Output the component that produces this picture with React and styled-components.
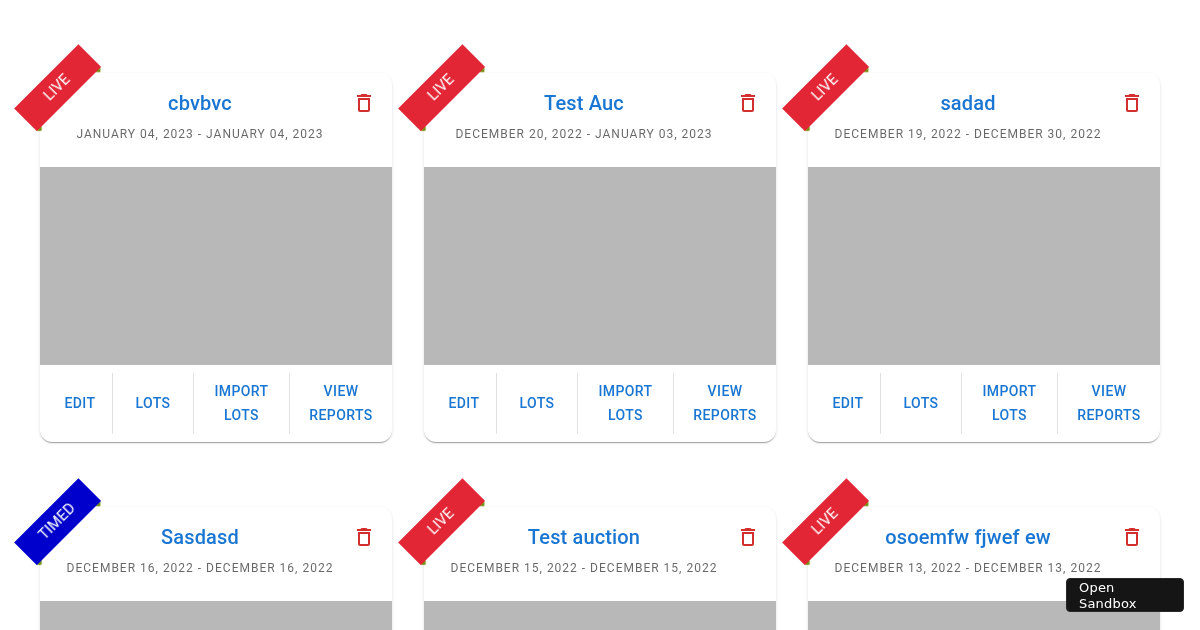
import React from "react";
import styled, { createGlobalStyle } from "styled-components";

const GlobalStyle = createGlobalStyle`
  html, body {
    margin: 0;
    height: 630px;
    overflow: hidden;
    background: #fff;
    font-family: Roboto, "Liberation Sans", sans-serif;
  }
`;

const Grid = styled.div`
  display: grid;
  grid-template-columns: repeat(3, 352px);
  column-gap: 32px;
  row-gap: 65px;
  padding: 73px 40px 0;
  will-change: transform;
`;

const Card = styled.div`
  position: relative;
  background: #fff;
  border-radius: 12px;
  box-shadow: 0 2px 1px -1px rgba(0, 0, 0, 0.2), 0 1px 1px rgba(0, 0, 0, 0.14),
    0 1px 3px rgba(0, 0, 0, 0.12);
`;

const Ribbon = styled.div`
  position: absolute;
  left: -28.5px;
  top: -1.5px;
  width: 90.5px;
  height: 31.5px;
  display: flex;
  align-items: center;
  justify-content: center;
  transform: rotate(-45deg);
  background: ${(props) => (props.$kind === "TIMED" ? "#0000cc" : "#e32636")};
  color: #fff;
  font-size: 15px;
  line-height: 1;

  &::before,
  &::after {
    content: "";
    position: absolute;
    top: 100%;
    width: 7.5px;
    height: 3.75px;
    background: #76900f;
    clip-path: polygon(0 0, 100% 0, 50% 100%);
  }
  &::before {
    left: 0;
  }
  &::after {
    right: 0;
  }
`;

const Header = styled.div`
  display: flex;
  align-items: flex-start;
  height: 94px;
  box-sizing: border-box;
  padding: 14px 8px 0 16px;
`;

const HeaderText = styled.div`
  flex: 1;
  min-width: 0;
  text-align: center;
`;

const Title = styled.div`
  color: #1976d2;
  font-size: 20px;
  font-weight: 500;
  line-height: 32px;
  letter-spacing: 0.15px;
`;

const Dates = styled.div`
  margin-top: -1px;
  color: rgba(0, 0, 0, 0.6);
  font-size: 12px;
  line-height: 32px;
  letter-spacing: 1px;
  text-transform: uppercase;
`;

const DeleteButton = styled.button`
  width: 40px;
  height: 40px;
  margin-top: -4px;
  padding: 8px;
  border: 0;
  background: none;
  color: #d32f2f;
  cursor: pointer;
`;

const TrashIcon = styled.svg`
  display: block;
  width: 24px;
  height: 24px;
  fill: currentColor;
`;

const Media = styled.div`
  height: 198px;
  background: #b8b8b8;
`;

const Actions = styled.div`
  display: grid;
  grid-template-columns: 65px 81px 96px 1fr;
  height: 77px;
  box-sizing: border-box;
  padding: 8px 0 8px 8px;
`;

const ActionButton = styled.button`
  padding: 5px 8px 7px;
  border: 0;
  border-right: 1px solid rgba(0, 0, 0, 0.12);
  background: none;
  color: #1976d2;
  font-family: inherit;
  font-size: 14px;
  font-weight: 500;
  line-height: 24px;
  letter-spacing: 0.4px;
  text-transform: uppercase;
  cursor: pointer;

  &:last-child {
    border-right: 0;
  }
`;

const SandboxLink = styled.a`
  position: fixed;
  left: 1066px;
  top: 578px;
  width: 118px;
  height: 34px;
  box-sizing: border-box;
  padding: 1px 12px;
  background: #151515;
  border: 1px solid #282828;
  border-radius: 4px;
  color: #fff;
  font-family: "DejaVu Sans", sans-serif;
  font-size: 13px;
  line-height: 16px;
  letter-spacing: 0.2px;
  will-change: transform;
`;

const auctions = [
  { kind: "LIVE", title: "cbvbvc", dates: "January 04, 2023 - January 04, 2023" },
  { kind: "LIVE", title: "Test Auc", dates: "December 20, 2022 - January 03, 2023" },
  { kind: "LIVE", title: "sadad", dates: "December 19, 2022 - December 30, 2022" },
  { kind: "TIMED", title: "Sasdasd", dates: "December 16, 2022 - December 16, 2022" },
  { kind: "LIVE", title: "Test auction", dates: "December 15, 2022 - December 15, 2022" },
  { kind: "LIVE", title: "osoemfw fjwef ew", dates: "December 13, 2022 - December 13, 2022" },
];

const App = () => {
  return (
    <>
      <GlobalStyle />
      <Grid>
        {auctions.map((item) => (
          <Card key={item.title}>
            <Ribbon $kind={item.kind}>{item.kind}</Ribbon>
            <Header>
              <HeaderText>
                <Title>{item.title}</Title>
                <Dates>{item.dates}</Dates>
              </HeaderText>
              <DeleteButton aria-label="delete">
                <TrashIcon viewBox="0 0 24 24">
                  <path d="M6 19c0 1.1.9 2 2 2h8c1.1 0 2-.9 2-2V7H6v12zM8 9h8v10H8V9zm7.5-5l-1-1h-5l-1 1H5v2h14V4z" />
                </TrashIcon>
              </DeleteButton>
            </Header>
            <Media />
            <Actions>
              <ActionButton>Edit</ActionButton>
              <ActionButton>Lots</ActionButton>
              <ActionButton>Import Lots</ActionButton>
              <ActionButton>View Reports</ActionButton>
            </Actions>
          </Card>
        ))}
      </Grid>
      <SandboxLink>Open Sandbox</SandboxLink>
    </>
  );
};

export default App;
